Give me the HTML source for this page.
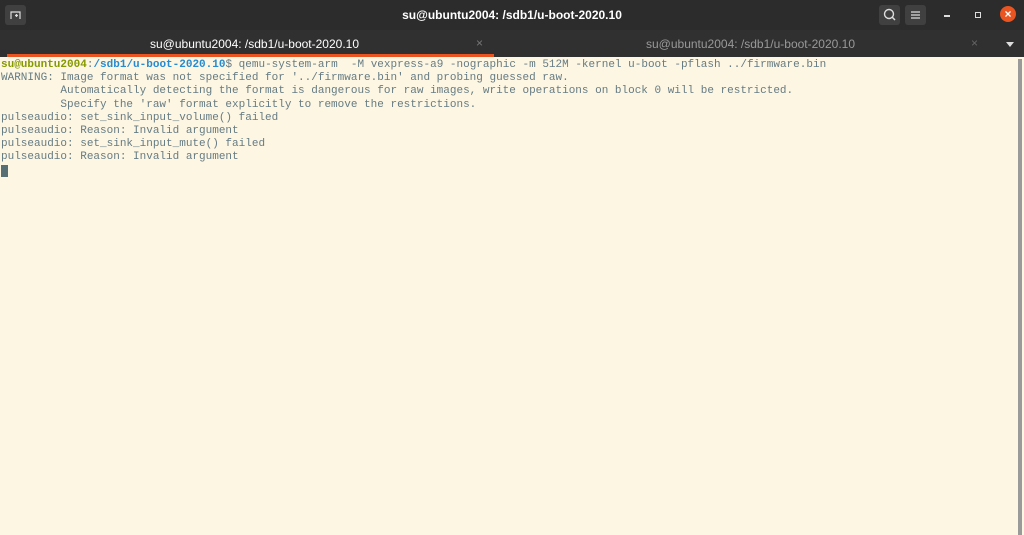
<!DOCTYPE html><html><head><style>
*{margin:0;padding:0;box-sizing:border-box}
body{width:1024px;height:535px;overflow:hidden;background:#fdf6e3;position:relative;font-family:"Liberation Sans",sans-serif}
#hb{position:absolute;left:0;top:0;width:1024px;height:30px;background:#2c2c2c}
#tb{position:absolute;left:0;top:30px;width:1024px;height:27px;background:#303030}
.t{position:absolute;color:#fff;font-size:12px;font-weight:bold}
.btn{position:absolute;top:5px;width:21px;height:20px;background:#404040;border-radius:3px}
#term{position:absolute;left:1px;top:59px;font-family:"Liberation Mono",monospace;font-size:11px;line-height:13.2px;color:#657b83;white-space:pre}
.g{color:#859900;font-weight:bold}.b{color:#268bd2;font-weight:bold}
</style></head><body>
<div id="hb"></div>
<div class="btn" style="left:5px"><svg width="21" height="20"><path d="M6 14V7h9v7M10 10.5h3M11.5 9v3" stroke="#ddd" fill="none" stroke-width="1.2"/></svg></div>
<div class="t" style="left:0;width:1024px;text-align:center;top:8px">su@ubuntu2004: /sdb1/u-boot-2020.10</div>
<div class="btn" style="left:879px"><svg width="21" height="20"><circle cx="10" cy="9" r="4.5" stroke="#ddd" fill="none" stroke-width="1.4"/><path d="M13 12l3 3" stroke="#ddd" stroke-width="1.5"/></svg></div>
<div class="btn" style="left:905px"><svg width="21" height="20"><path d="M6 7h9M6 10h9M6 13h9" stroke="#ddd" stroke-width="1.2"/></svg></div>
<div style="position:absolute;left:944px;top:15px;width:6px;height:1.5px;background:#ddd"></div>
<div style="position:absolute;left:975px;top:12px;width:6px;height:6px;border:1.3px solid #ddd"></div>
<div style="position:absolute;left:1000px;top:6px;width:16px;height:16px;border-radius:50%;background:#e95420;color:#fff;font-size:12px;line-height:16px;text-align:center;font-weight:bold">×</div>
<div id="tb"></div>
<div class="t" style="left:150px;top:37px;font-weight:normal;font-size:12px">su@ubuntu2004: /sdb1/u-boot-2020.10</div>
<div class="t" style="left:476px;top:36px;color:#777;font-weight:normal">×</div>
<div class="t" style="left:646px;top:37px;color:#999;font-weight:normal">su@ubuntu2004: /sdb1/u-boot-2020.10</div>
<div class="t" style="left:971px;top:36px;color:#666;font-weight:normal">×</div>
<div style="position:absolute;left:1006px;top:42px;border-left:4px solid transparent;border-right:4px solid transparent;border-top:5px solid #ddd"></div>
<div style="position:absolute;left:7px;top:54px;width:487px;height:3px;background:#e95420"></div>
<div style="position:absolute;left:1018px;top:59px;width:4px;height:476px;background:#9a9a9a"></div>
<div id="term"><span class="g">su@ubuntu2004</span>:<span class="b">/sdb1/u-boot-2020.10</span>$ qemu-system-arm  -M vexpress-a9 -nographic -m 512M -kernel u-boot -pflash ../firmware.bin
WARNING: Image format was not specified for '../firmware.bin' and probing guessed raw.
         Automatically detecting the format is dangerous for raw images, write operations on block 0 will be restricted.
         Specify the 'raw' format explicitly to remove the restrictions.
pulseaudio: set_sink_input_volume() failed
pulseaudio: Reason: Invalid argument
pulseaudio: set_sink_input_mute() failed
pulseaudio: Reason: Invalid argument
<span style="background:#586e75"> </span></div>
</body></html>
